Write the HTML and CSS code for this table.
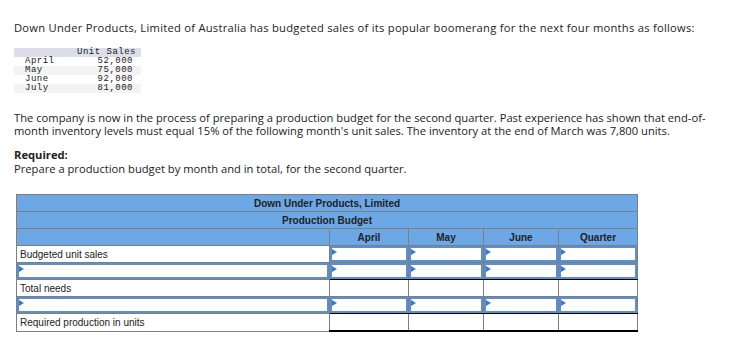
FILE: index.html
```html
<!DOCTYPE html>
<html>
<head>
<meta charset="utf-8">
<link rel="stylesheet" href="styles.css">
</head>
<body>
<p class="intro">Down Under Products, Limited of Australia has budgeted sales of its popular boomerang for the next four months as follows:</p>
<table class="sales">
  <tr class="sh"><td></td><td class="num hd">Unit Sales</td></tr>
  <tr><td class="mon">April</td><td class="num">52,000</td></tr>
  <tr class="alt"><td class="mon">May</td><td class="num">75,000</td></tr>
  <tr><td class="mon">June</td><td class="num">92,000</td></tr>
  <tr class="alt"><td class="mon">July</td><td class="num">81,000</td></tr>
</table>
<p class="body">The company is now in the process of preparing a production budget for the second quarter. Past experience has shown that end-of-month inventory levels must equal 15% of the following month's unit sales. The inventory at the end of March was 7,800 units.</p>
<div class="req">
  <div class="req-title">Required:</div>
  <div>Prepare a production budget by month and in total, for the second quarter.</div>
</div>
<table class="budget">
  <colgroup>
    <col class="c-label"><col class="c-apr"><col class="c-may"><col class="c-jun"><col class="c-q">
  </colgroup>
  <tr class="h"><th colspan="5">Down Under Products, Limited</th></tr>
  <tr class="h"><th colspan="5">Production Budget</th></tr>
  <tr class="h"><th></th><th>April</th><th>May</th><th>June</th><th>Quarter</th></tr>
  <tr class="b"><td class="lbl">Budgeted unit sales</td><td class="in"><div class="box"></div></td><td class="in"><div class="box"></div></td><td class="in"><div class="box"></div></td><td class="in"><div class="box"></div></td></tr>
  <tr class="b"><td class="in"><div class="box"></div></td><td class="in pre"><div class="box"></div></td><td class="in pre"><div class="box"></div></td><td class="in pre"><div class="box"></div></td><td class="in pre"><div class="box"></div></td></tr>
  <tr class="b"><td class="lbl">Total needs</td><td class="tot"></td><td class="tot"></td><td class="tot"></td><td class="tot"></td></tr>
  <tr class="b"><td class="in"><div class="box"></div></td><td class="in pre"><div class="box"></div></td><td class="in pre"><div class="box"></div></td><td class="in pre"><div class="box"></div></td><td class="in pre"><div class="box"></div></td></tr>
  <tr class="b"><td class="lbl">Required production in units</td><td class="fin"></td><td class="fin"></td><td class="fin"></td><td class="fin"></td></tr>
</table>
</body>
</html>
```
FILE: styles.css
```css
body {
  margin: 0;
  padding: 21px 14px 0 14px;
  font-family: "Open Sans", Lato, sans-serif;
  font-size: 11.2px;
  line-height: 13px;
  color: #222;
  background: #fff;
}
.intro { margin: 0; letter-spacing: 0.25px; }
.sales {
  margin-top: 14px;
  border-collapse: collapse;
  font-family: "Liberation Mono", "Courier New", monospace;
  font-size: 9px;
  letter-spacing: 0.5px;
  line-height: 9px;
  color: #1a1a1a;
  width: 127px;
}
.sales td { padding: 0; height: 9px; }
.sales .sh { background: #dcdfe9; }
.sales .alt { background: #f3f3f3; }
.sales .mon { padding-left: 11px; }
.sales .num { text-align: right; padding-right: 8px; }
.sales .hd { padding-right: 5px; }
.body { margin: 18px 0 0 0; }
.req { margin-top: 11px; line-height: 14px; }
.req-title { font-weight: bold; }
.budget {
  margin: 18px 0 0 2px;
  border-collapse: collapse;
  table-layout: fixed;
  width: 621px;
  font-family: "Liberation Sans", Arial, sans-serif;
  font-size: 10px;
  color: #222;
}
.c-label { width: 313px; }
.c-apr { width: 79px; }
.c-may { width: 75px; }
.c-jun { width: 75px; }
.c-q { width: 79px; }
.budget th, .budget td {
  border: 1px solid #7f7f7f;
  padding: 0;
}
.budget .h th {
  background: #6ca7e6;
  height: 16px;
  font-weight: bold;
  text-align: center;
}
.budget .b td { height: 16px; background: #fff; }
.budget .lbl { padding-left: 3px; }
.budget .in { padding: 0; }
.box {
  position: relative;
  height: 12px;
  border: 2px solid #5b8fd4;
}
.box::before {
  content: "";
  position: absolute;
  left: 0;
  top: 1px;
  border-left: 5px solid #3c78c8;
  border-top: 3px solid transparent;
  border-bottom: 3px solid transparent;
}
.budget .pre { border-bottom: 1px solid #000; }
.budget .tot { border-top: 1px solid #000; }
.budget .fin { border-top: 1px solid #000; border-bottom: 2px solid #000; }
```
